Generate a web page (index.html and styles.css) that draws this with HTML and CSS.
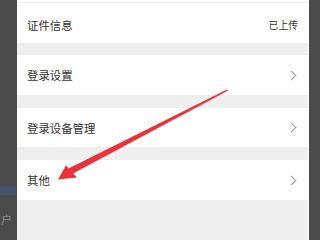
FILE: index.html
```html
<!DOCTYPE html>
<html lang="zh">
<head>
<meta charset="utf-8">
<link rel="stylesheet" href="styles.css">
</head>
<body>
<div class="screen">
  <div class="side left">
    <div class="bg-blue"></div>
    <div class="bg-char">户</div>
  </div>
  <div class="panel">
    <div class="row first">
      <span class="label">证件信息</span>
      <span class="value">已上传</span>
    </div>
    <div class="band"></div>
    <div class="row">
      <span class="label">登录设置</span>
      <span class="chev"></span>
    </div>
    <div class="band b2"></div>
    <div class="row r3">
      <span class="label">登录设备管理</span>
      <span class="chev"></span>
    </div>
    <div class="band b2"></div>
    <div class="row">
      <span class="label">其他</span>
      <span class="chev"></span>
    </div>
    <div class="rest"></div>
  </div>
  <div class="side right"></div>
  <svg class="arrow" width="320" height="240" viewBox="0 0 320 240">
    <polygon points="227,89.5 227.8,90.8 72,174 68.5,168.5" fill="#e8333a"/>
    <polygon points="58,179.5 66,165.5 77,177.5" fill="#e8333a"/>
  </svg>
</div>
</body>
</html>
```
FILE: styles.css
```css
* { box-sizing: border-box; }
html, body { margin: 0; padding: 0; }
body {
  width: 320px;
  height: 240px;
  overflow: hidden;
  font-family: "Noto Sans CJK SC", "Noto Sans", sans-serif;
}
.screen {
  position: relative;
  display: flex;
  width: 320px;
  height: 240px;
}
.side {
  background: #4b4b4b;
  height: 240px;
}
.side.left {
  width: 17px;
  display: flex;
  flex-direction: column;
  padding-top: 186px;
}
.side.right {
  width: 11px;
}
.bg-blue {
  width: 16px;
  height: 9px;
  background: #44546f;
}
.bg-char {
  margin-top: 17px;
  margin-left: 1px;
  font-size: 11px;
  line-height: 14px;
  color: #8a8a8a;
}
.panel {
  width: 292px;
  height: 240px;
  display: flex;
  flex-direction: column;
  background: #ffffff;
  border-right: 1px solid #ffffff;
}
.row {
  height: 40px;
  display: flex;
  align-items: center;
  justify-content: space-between;
  padding: 0 10px 0 10px;
  background: #ffffff;
}
.row.first {
  height: 43px;
  padding-top: 3px;
  border-top: 1px solid #f0f0f0;
  margin-top: 2px;
  height: 41px;
}
.row.r3 { height: 39px; }
.label {
  font-size: 11.4px;
  color: #333333;
  letter-spacing: 0px;
}
.value {
  font-size: 9.8px;
  color: #333333;
}
.chev {
  width: 7px;
  height: 7px;
  border-top: 1px solid #9a9a9a;
  border-right: 1px solid #9a9a9a;
  transform: rotate(45deg);
  margin-right: 3px;
}
.band {
  height: 12px;
  background: #efefef;
}
.band.b2 { height: 13px; }
.rest {
  flex: 1;
  background: #efefef;
}
.arrow {
  position: absolute;
  left: 0;
  top: 0;
}
```
